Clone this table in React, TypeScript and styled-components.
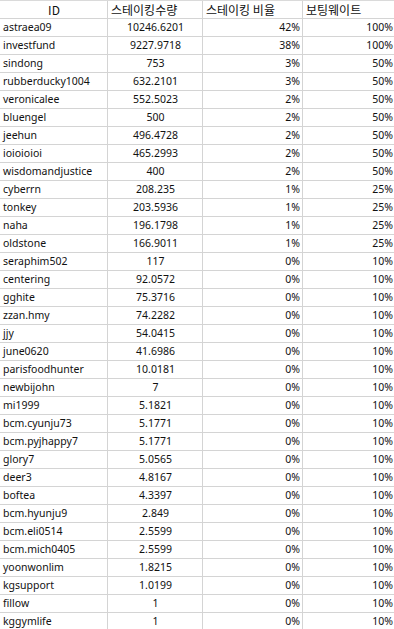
import React from "react";
import styled, { createGlobalStyle } from "styled-components";

const GlobalStyle = createGlobalStyle`
  html, body {
    margin: 0;
    padding: 0;
    background: #ffffff;
    overflow: hidden;
  }
  * { box-sizing: border-box; }
`;

const Sheet = styled.div`
  width: 394px;
  height: 629px;
  overflow: hidden;
  display: grid;
  grid-template-columns: 108px 95px 100px 1fr;
  grid-auto-rows: 18px;
  border-top: 1px solid #dadada;
  font-family: "Noto Sans", "Noto Sans CJK KR", sans-serif;
  color: #111111;
`;

type Align = "left" | "center" | "right";

const Cell = styled.div<{ $align: Align; $last?: boolean }>`
  height: 18px;
  line-height: 17px;
  font-size: 10.5px;
  padding: 0 ${(p) => (p.$last ? "1px" : "2px")} 0 3px;
  text-align: ${(p) => p.$align};
  border-bottom: 1px solid #d4d4d4;
  border-right: ${(p) => (p.$last ? "none" : "1px solid #d4d4d4")};
  white-space: nowrap;
  overflow: hidden;
`;

const HeadCell = styled(Cell)`
  height: 18px;
  font-family: "Noto Sans CJK KR", "Noto Sans", sans-serif;
  font-size: 12px;
  line-height: 17px;
`;

type Row = [string, string, string, string];

const rows: Row[] = [
  ["astraea09", "10246.6201", "42%", "100%"],
  ["investfund", "9227.9718", "38%", "100%"],
  ["sindong", "753", "3%", "50%"],
  ["rubberducky1004", "632.2101", "3%", "50%"],
  ["veronicalee", "552.5023", "2%", "50%"],
  ["bluengel", "500", "2%", "50%"],
  ["jeehun", "496.4728", "2%", "50%"],
  ["ioioioioi", "465.2993", "2%", "50%"],
  ["wisdomandjustice", "400", "2%", "50%"],
  ["cyberrn", "208.235", "1%", "25%"],
  ["tonkey", "203.5936", "1%", "25%"],
  ["naha", "196.1798", "1%", "25%"],
  ["oldstone", "166.9011", "1%", "25%"],
  ["seraphim502", "117", "0%", "10%"],
  ["centering", "92.0572", "0%", "10%"],
  ["gghite", "75.3716", "0%", "10%"],
  ["zzan.hmy", "74.2282", "0%", "10%"],
  ["jjy", "54.0415", "0%", "10%"],
  ["june0620", "41.6986", "0%", "10%"],
  ["parisfoodhunter", "10.0181", "0%", "10%"],
  ["newbijohn", "7", "0%", "10%"],
  ["mi1999", "5.1821", "0%", "10%"],
  ["bcm.cyunju73", "5.1771", "0%", "10%"],
  ["bcm.pyjhappy7", "5.1771", "0%", "10%"],
  ["glory7", "5.0565", "0%", "10%"],
  ["deer3", "4.8167", "0%", "10%"],
  ["boftea", "4.3397", "0%", "10%"],
  ["bcm.hyunju9", "2.849", "0%", "10%"],
  ["bcm.eli0514", "2.5599", "0%", "10%"],
  ["bcm.mich0405", "2.5599", "0%", "10%"],
  ["yoonwonlim", "1.8215", "0%", "10%"],
  ["kgsupport", "1.0199", "0%", "10%"],
  ["fillow", "1", "0%", "10%"],
  ["kggymlife", "1", "0%", "10%"],
];

export default function App() {
  return (
    <>
      <GlobalStyle />
      <Sheet>
        <HeadCell $align="center">ID</HeadCell>
        <HeadCell $align="left">스테이킹수량</HeadCell>
        <HeadCell $align="left">스테이킹 비율</HeadCell>
        <HeadCell $align="left" $last>보팅웨이트</HeadCell>
        {rows.map((r) => (
          <React.Fragment key={r[0]}>
            <Cell $align="left">{r[0]}</Cell>
            <Cell $align="center">{r[1]}</Cell>
            <Cell $align="right">{r[2]}</Cell>
            <Cell $align="right" $last>{r[3]}</Cell>
          </React.Fragment>
        ))}
      </Sheet>
    </>
  );
}
